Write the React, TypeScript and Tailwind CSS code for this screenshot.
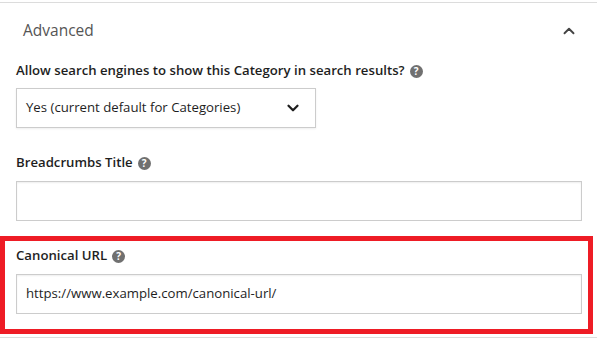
import { ChevronDown, ChevronUp } from 'lucide-react'

const HelpIcon = () => (
  <span className="inline-flex size-[13px] items-center justify-center rounded-full bg-[#707070] text-[10px] font-bold leading-none text-white">
    ?
  </span>
)

const FieldLabel = ({ children }: { children: string }) => (
  <div className="flex h-5 items-center gap-[5px] text-[13.2px] font-semibold text-[#1e1e1e]">
    <span>{children}</span>
    <HelpIcon />
  </div>
)

const TextBox = ({ value, className = '' }: { value?: string; className?: string }) => (
  <div
    className={`flex h-10 items-center border border-[#cccccc] bg-white px-[9px] text-[13.2px] text-[#1e1e1e] shadow-[inset_0_1px_2px_rgba(0,0,0,0.07)] ${className}`}
  >
    {value}
  </div>
)

export default function App() {
  return (
    <div
      className="h-[342px] w-[597px] overflow-hidden bg-white"
      style={{ fontFamily: '"Open Sans", "Noto Sans", sans-serif' }}
    >
      <div className="mt-[2px] border-t border-[#dcdcdc]" />
      {/* Section header */}
      <div className="flex h-[56px] items-center justify-between pl-[23px] pr-[19px]">
        <span className="text-[15.5px] text-[#555555]">Advanced</span>
        <ChevronUp size={18} strokeWidth={2.5} className="text-[#444444]" />
      </div>

      <div className="px-4">
        <div className="mt-[2px]">
          <FieldLabel>Allow search engines to show this Category in search results?</FieldLabel>
        </div>
        <div className="mt-[7px] flex h-10 w-[300px] items-center justify-between border border-[#cccccc] bg-white pl-[9px] pr-[13px] text-[13.2px] text-[#1e1e1e] shadow-[0_1px_2px_rgba(0,0,0,0.07)]">
          <span>Yes (current default for Categories)</span>
          <ChevronDown size={18} strokeWidth={3} className="text-[#1e1e1e]" />
        </div>

        <div className="mt-[25px]">
          <FieldLabel>Breadcrumbs Title</FieldLabel>
        </div>
        <TextBox className="mt-2 w-[566px]" />
      </div>

      {/* Highlighted field */}
      <div className="mt-[15px] w-[593px] border-[5px] border-[#ee1c25] pb-[15px] pl-[11px] pr-[6px] pt-[5px]">
        <FieldLabel>Canonical URL</FieldLabel>
        <TextBox className="mt-2" value="https://www.example.com/canonical-url/" />
      </div>
      <div className="mt-[3px] border-t border-[#dcdcdc]" />
    </div>
  )
}
